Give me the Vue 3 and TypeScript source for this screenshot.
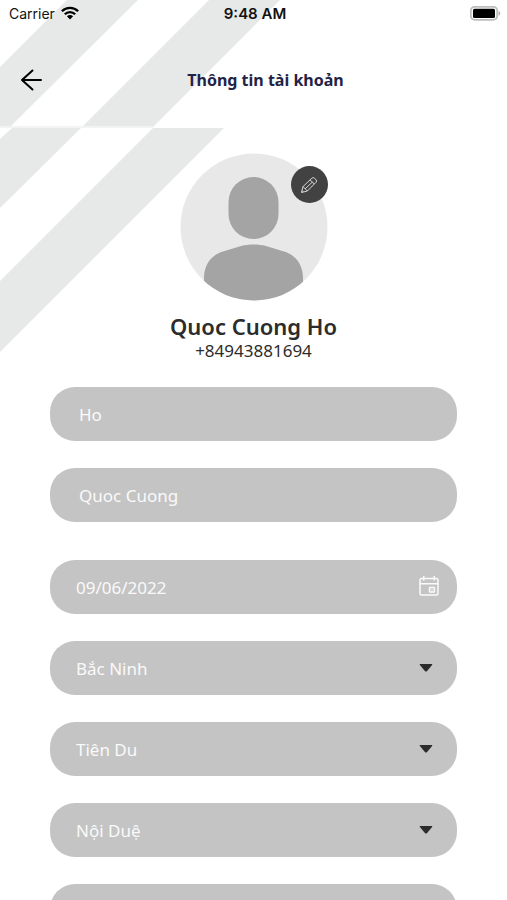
<script setup lang="ts">
import { reactive, ref } from 'vue'

interface NameField {
  id: string
  label: string
  value: string
}

interface PlaceField extends NameField {
  options: string[]
}

const names = reactive<NameField[]>([
  { id: 'last-name', label: 'Họ', value: 'Ho' },
  { id: 'first-name', label: 'Tên', value: 'Quoc Cuong' },
])

const birthday = ref<string>('09/06/2022')

const places = reactive<PlaceField[]>([
  { id: 'province', label: 'Tỉnh', value: 'Bắc Ninh', options: ['Bắc Ninh'] },
  { id: 'district', label: 'Huyện', value: 'Tiên Du', options: ['Tiên Du'] },
  { id: 'ward', label: 'Xã', value: 'Nội Duệ', options: ['Nội Duệ'] },
  { id: 'street', label: 'Thôn', value: '', options: [''] },
])
</script>

<template>
  <div class="screen">
    <svg class="stripes" viewBox="0 0 280 352" aria-hidden="true">
      <path d="M67 0H138L11 126H0V67Z M209 0H280L154 126H83Z" />
      <path d="M12 128H81L0 208V139Z M153 128H224L0 352V281Z" />
      <path class="seam" d="M0 126H155L153 128H0Z" />
    </svg>

    <div class="status">
      <div class="carrier">
        <span>Carrier</span>
        <svg width="18" height="14" viewBox="0 0 18 14" aria-hidden="true">
          <g fill="none" stroke="#000" stroke-width="2.3">
            <path d="M0.9 5.2C5.4 0.7 12.6 0.7 17.1 5.2" />
            <path d="M3.8 8.2C6.7 5.3 11.3 5.3 14.2 8.2" />
          </g>
          <path d="M5.9 10.3C7.7 8.6 10.3 8.6 12.1 10.3L9 13.5Z" />
        </svg>
      </div>
      <time class="clock">9:48 AM</time>
      <svg class="battery" width="31" height="15" viewBox="0 0 31 15" aria-hidden="true">
        <rect x="0.8" y="0.8" width="26.4" height="13" rx="4" fill="#fff" stroke="#bdbdbd" stroke-width="1.8" />
        <rect x="3" y="2.700" width="22" height="9.200" rx="1.5" />
        <path d="M28.6 5C30.8 6 30.8 8.700 28.6 9.700Z" fill="#aaa" />
      </svg>
    </div>

    <header class="header">
      <button class="back" type="button" aria-label="Quay lại">
        <svg width="22" height="22" viewBox="0 0 22 22" aria-hidden="true">
          <path d="M12.500 1.500L2 11L12.500 20.500M2 11H21" />
        </svg>
      </button>
      <h1>Thông tin tài khoản</h1>
    </header>

    <section class="profile">
      <div class="avatar">
        <svg viewBox="0 0 148 148" aria-hidden="true">
          <defs>
            <clipPath id="avatar-circle"><circle cx="74" cy="74" r="73.500" /></clipPath>
          </defs>
          <circle cx="74" cy="74" r="73.500" fill="#e8e8e8" />
          <g fill="#a4a4a4" clip-path="url(#avatar-circle)">
            <rect x="48.500" y="24" width="50" height="62" rx="25" />
            <path d="M24 148V125C24 112 31 102 43 98.500L61 93C69 91 78 91 86 93L104 98.500C116 102 123 112 123 125V148Z" />
          </g>
        </svg>
        <button class="edit" type="button" aria-label="Sửa ảnh">
          <svg width="18" height="18" viewBox="0 0 18 18" aria-hidden="true">
            <path d="M1.500 16.500L3 10.600L11.800 2.200Q13.200 1 14.600 2.300L16 3.700Q17.200 5 16 6.300L7.400 15ZM3 10.600L7.400 15M10.200 3.900L14.200 8M5.200 12.800L12.400 6M2 14.500L3.500 16" />
          </svg>
        </button>
      </div>
      <h2>Quoc Cuong Ho</h2>
      <p>+84943881694</p>
    </section>

    <form class="form" @submit.prevent>
      <div class="group">
        <input
          v-for="field in names"
          :id="field.id"
          :key="field.id"
          v-model="field.value"
          class="field name"
          type="text"
          :aria-label="field.label"
        />
      </div>

      <div class="group">
        <div class="control">
          <input id="birthday" v-model="birthday" class="field" type="text" aria-label="Ngày sinh" />
          <button class="calendar" type="button" aria-label="Chọn ngày">
            <svg width="20" height="20" viewBox="0 0 20 20" aria-hidden="true">
              <rect x="1" y="2.500" width="18" height="16.500" rx="1.500" />
              <path d="M1 7.800H19M4.800 0V4.500M15.200 0V4.500" />
              <rect x="10.500" y="11.500" width="5" height="4.500" rx="0.500" />
              <path d="M12.300 13.700H13.700" />
            </svg>
          </button>
        </div>
        <div v-for="place in places" :key="place.id" class="control">
          <select :id="place.id" v-model="place.value" class="field" :aria-label="place.label">
            <option v-for="option in place.options" :key="option" :value="option">{{ option }}</option>
          </select>
          <svg class="caret" width="14" height="8" viewBox="0 0 14 8" aria-hidden="true">
            <path d="M1.200 0H12.800Q13.800 0 13.100 0.900L7.900 7.200Q7 8 6.100 7.200L0.900 0.900Q0.200 0 1.200 0Z" />
          </svg>
        </div>
      </div>
    </form>
  </div>
</template>

<style>
body {
  margin: 0;
  background: #fff;
}
</style>

<style scoped>
.screen {
  position: relative;
  height: 100vh;
  overflow: hidden;
  font-family: "Noto Sans", "Open Sans", sans-serif;
  color: #2c2c2c;
}

.screen * {
  box-sizing: border-box;
}

.stripes {
  position: absolute;
  top: 0;
  left: 0;
  z-index: -1;
  width: 280px;
  fill: #e7e9e8;
}

.stripes .seam {
  fill: #f2f3f3;
}

.status {
  display: grid;
  grid-template-columns: 1fr auto 1fr;
  align-items: center;
  height: 26px;
  padding: 0 6px 0 9px;
  font-family: Inter, sans-serif;
  font-size: 14px;
  color: #111;
}

.carrier {
  display: flex;
  align-items: center;
  gap: 6px;
}

.clock {
  font-size: 15px;
  font-weight: 600;
}

.battery {
  justify-self: end;
}

.header {
  display: grid;
  grid-template-columns: 44px 1fr 20px;
  align-items: center;
  height: 64px;
  margin-top: 22px;
  padding: 0 9px;
}

button {
  display: flex;
  align-items: center;
  justify-content: center;
  padding: 0;
  border: 0;
  background: none;
  cursor: pointer;
}

.back {
  width: 44px;
  height: 44px;
}

.back svg {
  fill: none;
  stroke: #000;
  stroke-width: 2;
  stroke-linecap: round;
  stroke-linejoin: round;
}

h1,
h2,
p {
  margin: 0;
  text-align: center;
}

h1 {
  font-size: 16px;
  font-weight: 700;
  line-height: 24px;
  color: #222347;
}

.profile {
  display: flex;
  flex-direction: column;
  align-items: center;
  padding-top: 41px;
}

.avatar {
  position: relative;
  width: 148px;
  height: 148px;
}

.avatar > svg {
  display: block;
  width: 100%;
}

.edit {
  position: absolute;
  top: 13px;
  right: 0;
  width: 37px;
  height: 37px;
  border-radius: 50%;
  background: #424242;
}

.edit svg {
  fill: none;
  stroke: #d8d8d8;
  stroke-width: 1;
}

h2 {
  margin-top: 11px;
  font-size: 22px;
  font-weight: 600;
  line-height: 28px;
}

p {
  font-size: 17px;
  line-height: 22px;
}

.form {
  display: flex;
  flex-direction: column;
  gap: 38px;
  padding: 25px 50px;
}

.group {
  display: flex;
  flex-direction: column;
  gap: 27px;
}

.control {
  position: relative;
}

.field {
  display: block;
  width: 100%;
  height: 54px;
  padding: 0 60px 0 26px;
  border: 0;
  border-radius: 25px;
  outline: 0;
  appearance: none;
  background: #c4c4c4;
  font-family: inherit;
  font-size: 17px;
  color: #fafafa;
}

.field.name {
  padding-left: 29px;
}

.calendar {
  position: absolute;
  top: 16px;
  right: 18px;
  width: 20px;
  height: 20px;
}

.calendar svg {
  fill: none;
  stroke: #fafafa;
  stroke-width: 1.5;
}

.caret {
  position: absolute;
  top: 23px;
  right: 24px;
  fill: #2c2c2c;
  pointer-events: none;
}
</style>
